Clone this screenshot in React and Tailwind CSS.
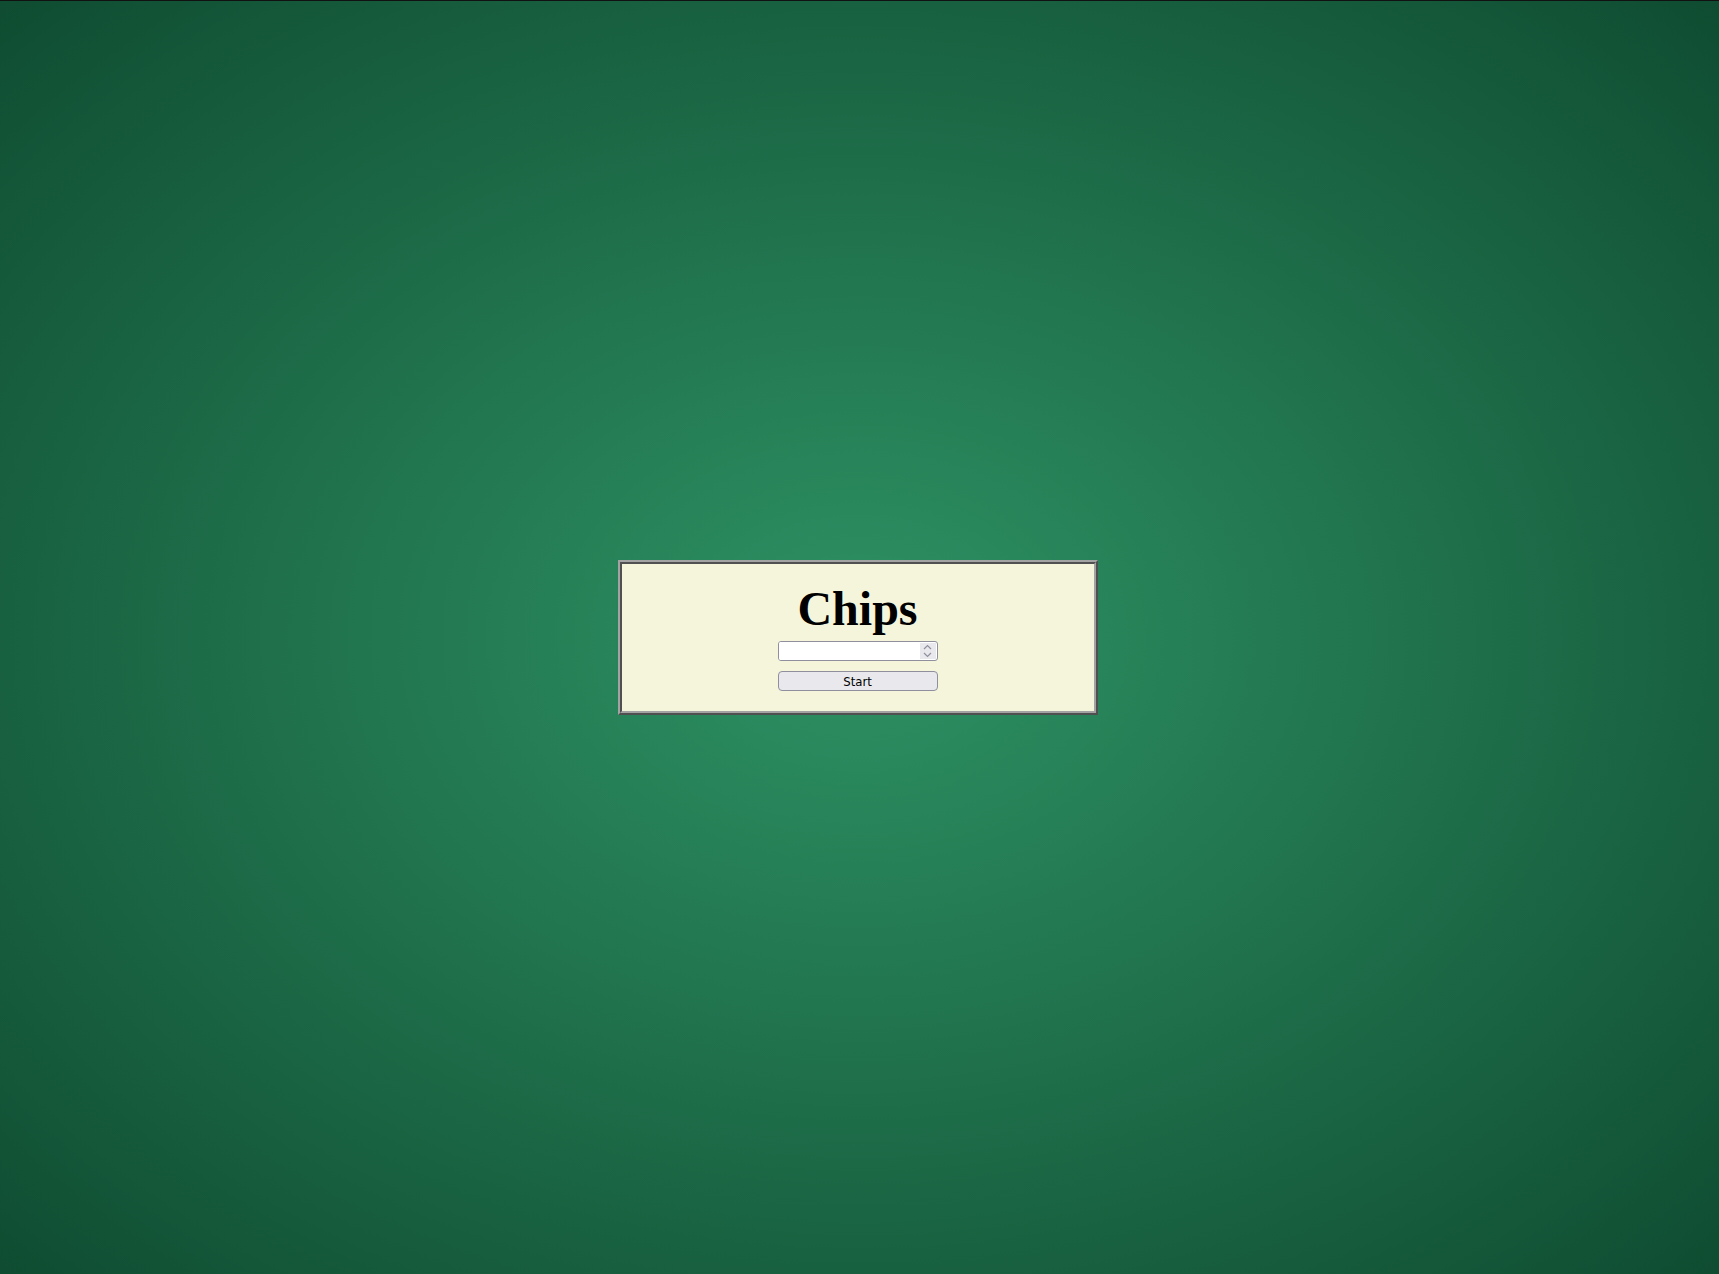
import React, { useState } from 'react'

function App() {
  const [chips, setChips] = useState('')

  const step = (d) => {
    const n = parseInt(chips || '0', 10) + d
    setChips(String(n))
  }

  return (
    <div className="min-h-screen w-full flex items-center justify-center pr-[4px] border-t border-[#111] bg-[radial-gradient(ellipse_at_center,#2e9264_0%,#0f4c31_100%)]">
      {/* hand-made ridge border: light outside top/left, dark inside */}
      <div className="w-[480px] h-[155px] border-2 border-t-[#a3a3a3] border-l-[#a3a3a3] border-b-[#505050] border-r-[#505050]">
        <div className="w-full h-full bg-[#f5f5dc] border-2 border-t-[#505050] border-l-[#505050] border-b-[#a3a3a3] border-r-[#a3a3a3] flex flex-col items-center pt-[21px]">
          <h1 className="font-['Liberation_Serif','Times_New_Roman',serif] font-bold text-[48px] leading-none text-black">
            Chips
          </h1>
          <div className="mt-[8px] w-[160px] h-[20px] flex bg-white border border-[#8f8f9d] rounded-[3px] overflow-hidden">
            <input
              type="text"
              value={chips}
              onChange={(e) => setChips(e.target.value)}
              className="flex-1 min-w-0 px-1 text-[13px] outline-none bg-white font-['DejaVu_Sans_Condensed','Liberation_Sans',sans-serif]"
            />
            <div className="w-[16px] my-[1px] mr-[1px] flex flex-col items-center justify-center gap-[1px] bg-[#e9e9ed]">
              <button onClick={() => step(1)} className="h-[7px] flex items-center justify-center">
                <svg width="9" height="6" viewBox="0 0 9 6" fill="none" stroke="#8f8f9d" strokeWidth="1.2">
                  <path d="M1 5 L4.5 1.5 L8 5" />
                </svg>
              </button>
              <button onClick={() => step(-1)} className="h-[7px] flex items-center justify-center">
                <svg width="9" height="6" viewBox="0 0 9 6" fill="none" stroke="#8f8f9d" strokeWidth="1.2">
                  <path d="M1 1 L4.5 4.5 L8 1" />
                </svg>
              </button>
            </div>
          </div>
          <button className="mt-[10px] w-[160px] h-[20px] bg-[#e9e9ed] border border-[#8f8f9d] rounded-[4px] text-[13px] leading-none text-black font-['DejaVu_Sans_Condensed','Liberation_Sans',sans-serif]">
            Start
          </button>
        </div>
      </div>
    </div>
  )
}

export default App
